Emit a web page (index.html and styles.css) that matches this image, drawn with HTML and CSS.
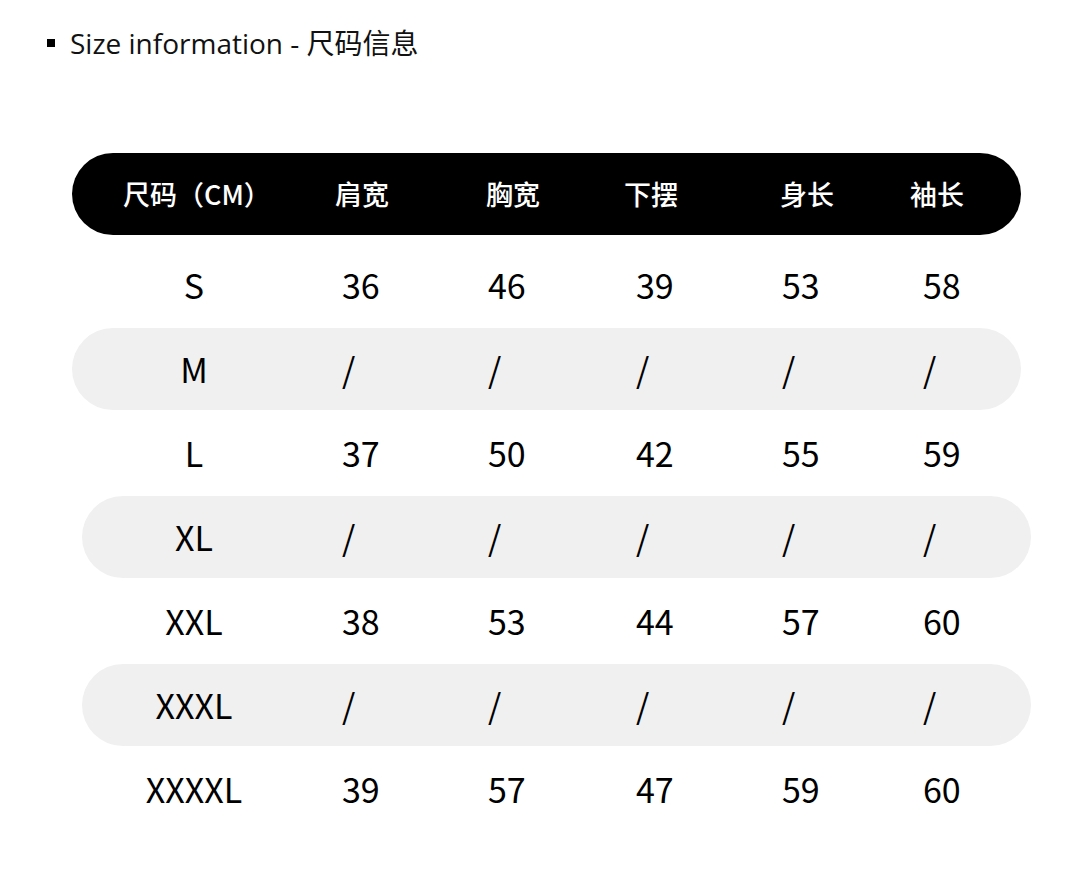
FILE: index.html
```html
<!DOCTYPE html>
<html lang="zh-CN">
<head>
<meta charset="utf-8">
<title>Size information</title>
<link rel="stylesheet" href="styles.css">
</head>
<body>
<div class="page">
  <div class="title">
    <span class="bullet"></span>
    <span class="title-text">Size information - 尺码信息</span>
  </div>
  <div class="table">
    <div class="head">
      <div class="hcell">尺码（CM）</div>
      <div class="hcell">肩宽</div>
      <div class="hcell">胸宽</div>
      <div class="hcell">下摆</div>
      <div class="hcell">身长</div>
      <div class="hcell">袖长</div>
    </div>
    <div class="row">
      <div class="size">S</div><div>36</div><div>46</div><div>39</div><div>53</div><div>58</div>
    </div>
    <div class="row gray">
      <div class="size">M</div><div>/</div><div>/</div><div>/</div><div>/</div><div>/</div>
    </div>
    <div class="row">
      <div class="size">L</div><div>37</div><div>50</div><div>42</div><div>55</div><div>59</div>
    </div>
    <div class="row gray shift">
      <div class="size">XL</div><div>/</div><div>/</div><div>/</div><div>/</div><div>/</div>
    </div>
    <div class="row">
      <div class="size">XXL</div><div>38</div><div>53</div><div>44</div><div>57</div><div>60</div>
    </div>
    <div class="row gray shift">
      <div class="size">XXXL</div><div>/</div><div>/</div><div>/</div><div>/</div><div>/</div>
    </div>
    <div class="row">
      <div class="size">XXXXL</div><div>39</div><div>57</div><div>47</div><div>59</div><div>60</div>
    </div>
  </div>
</div>
</body>
</html>
```
FILE: styles.css
```css
html, body {
  margin: 0;
  padding: 0;
  background: #ffffff;
}
.page {
  width: 1080px;
  height: 878px;
  padding-top: 28px;
  box-sizing: border-box;
  font-family: "Noto Sans CJK SC", "Noto Sans", sans-serif;
  color: #000;
}
.title {
  display: flex;
  align-items: center;
  height: 30px;
  padding-left: 47px;
  gap: 15px;
}
.bullet {
  width: 8px;
  height: 8px;
  background: #000;
}
.title-text {
  font-family: "Open Sans", "Noto Sans CJK SC", sans-serif;
  font-size: 28px;
  line-height: 30px;
  color: #111;
}
.table {
  margin-top: 95px;
  margin-left: 72px;
  width: 949px;
  display: flex;
  flex-direction: column;
  gap: 2px;
}
.head {
  height: 82px;
  background: #000;
  border-radius: 41px;
  display: grid;
  grid-template-columns: 212px 151px 138px 156px 130px 1fr;
  align-items: center;
  padding-left: 51px;
  margin-bottom: 7px;
  color: #fff;
  font-size: 27px;
  font-weight: 500;
}
.hcell {
  white-space: nowrap;
  line-height: 82px;
}
.row {
  height: 82px;
  border-radius: 41px;
  display: grid;
  grid-template-columns: 270px 146px 148px 146px 141px 1fr;
  align-items: center;
  font-size: 34px;
  line-height: 82px;
}
.row .size {
  text-align: center;
  padding-right: 26px;
}
.gray {
  background: #f0f0f0;
}
.shift {
  margin-left: 10px;
  margin-right: -10px;
  grid-template-columns: 260px 146px 148px 146px 141px 1fr;
}
.shift .size {
  padding-right: 36px;
}
```
